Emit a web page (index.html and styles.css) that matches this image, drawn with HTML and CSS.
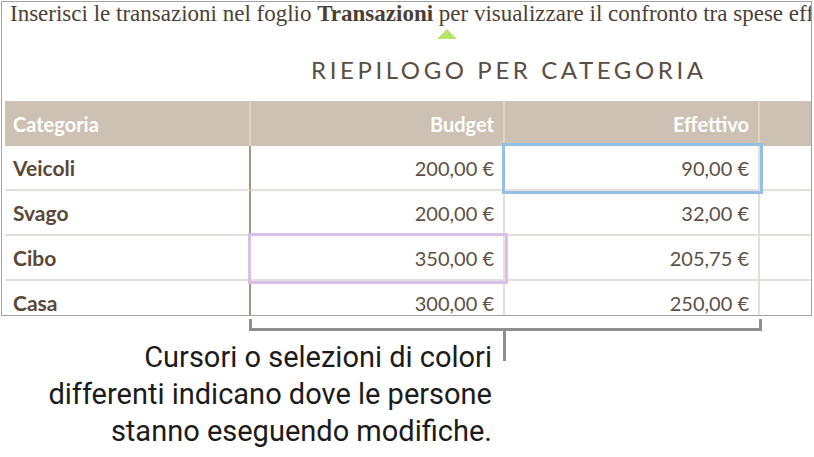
FILE: index.html
```html
<!DOCTYPE html>
<html lang="it">
<head>
<meta charset="utf-8">
<title>Riepilogo per categoria</title>
<link rel="stylesheet" href="styles.css">
</head>
<body>
<div class="frame">
  <p class="intro">Inserisci le transazioni nel foglio <b>Transazioni</b> per visualizzare il confronto tra spese effettive e budget.</p>
  <div class="cursor"></div>
  <h1 class="title">RIEPILOGO PER CATEGORIA</h1>
  <div class="table">
    <div class="cell head">Categoria</div>
    <div class="cell head num">Budget</div>
    <div class="cell head num">Effettivo</div>
    <div class="cell head last"></div>

    <div class="cell cat">Veicoli</div>
    <div class="cell num">200,00 €</div>
    <div class="cell num sel sel-blue">90,00 €</div>
    <div class="cell last"></div>

    <div class="cell cat">Svago</div>
    <div class="cell num">200,00 €</div>
    <div class="cell num">32,00 €</div>
    <div class="cell last"></div>

    <div class="cell cat">Cibo</div>
    <div class="cell num sel sel-purple">350,00 €</div>
    <div class="cell num">205,75 €</div>
    <div class="cell last"></div>

    <div class="cell cat">Casa</div>
    <div class="cell num">300,00 €</div>
    <div class="cell num">250,00 €</div>
    <div class="cell last"></div>
  </div>
</div>
<div class="bracket"></div>
<div class="callout">
  <p class="caption">Cursori o selezioni di colori<br>differenti indicano dove le persone<br>stanno eseguendo modifiche.</p>
  <div class="stem"></div>
</div>
</body>
</html>
```

FILE: styles.css
```css
html, body {
  margin: 0;
  padding: 0;
  background: #ffffff;
}

body {
  width: 814px;
  height: 457px;
  overflow: hidden;
}

.frame {
  box-sizing: border-box;
  margin: 1px 0 0 1px;
  width: 811px;
  height: 315px;
  border: 1px solid #a2a2a2;
  overflow: hidden;
}

.intro {
  margin: 0;
  padding: 0 0 0 8px;
  height: 26px;
  font-family: "Liberation Serif", serif;
  font-size: 23px;
  line-height: 24px;
  color: #4b3f36;
  white-space: nowrap;
  overflow: hidden;
}

.intro b {
  font-weight: bold;
}

.cursor {
  width: 0;
  height: 0;
  margin: 1px 0 0 435px;
  border-left: 10.5px solid transparent;
  border-right: 10.5px solid transparent;
  border-bottom: 10px solid #b8e36a;
}

.title {
  margin: 17px 0 0 309px;
  font-family: Lato, sans-serif;
  font-weight: 400;
  font-size: 24px;
  line-height: 28px;
  letter-spacing: 3.6px;
  color: #5a4d42;
}

.table {
  margin: 17px 0 0 3px;
  display: grid;
  grid-template-columns: 246px 254px 255px 1fr;
  grid-auto-rows: 45px;
  font-family: Lato, sans-serif;
  font-size: 20px;
  color: #5d5046;
}

.cell {
  box-sizing: border-box;
  display: flex;
  align-items: center;
  padding: 0 9px 0 8px;
  border-right: 2px solid #e4dfda;
  border-bottom: 2px solid #e4dfda;
  background: #ffffff;
}

.cell.last {
  border-right: none;
}

.head {
  height: 47px;
  background: #cdc1b4;
  color: #ffffff;
  font-weight: 700;
  border-right: 2px solid #ddd4cb;
  border-bottom: 2px solid #9d8c7b;
}

.num {
  justify-content: flex-end;
}

.cat {
  font-size: 21px;
  font-weight: 700;
  color: #5a4738;
  border-right: 2px solid #a6927f;
}

.sel {
  position: relative;
  z-index: 1;
}

.sel-blue {
  outline: 3px solid #95c0e6;
}

.sel-purple {
  outline: 3px solid #d8c0e8;
}

.bracket {
  box-sizing: border-box;
  margin: 3px 0 0 249px;
  width: 513px;
  height: 12px;
  border: 3px solid #8e8e8e;
  border-top: none;
}

.callout {
  display: flex;
  align-items: flex-start;
}

.caption {
  box-sizing: border-box;
  width: 492px;
  margin: 8px 0 0 0;
  font-family: Roboto, sans-serif;
  font-size: 29px;
  line-height: 37px;
  color: #1b1b1b;
  text-align: right;
}

.stem {
  width: 3px;
  height: 30px;
  margin-left: 11px;
  background: #8e8e8e;
}
```
